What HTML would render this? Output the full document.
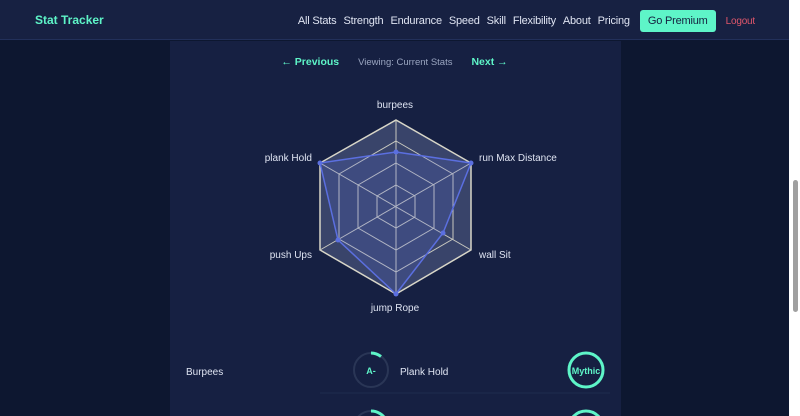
<!DOCTYPE html>
<html><head><meta charset="utf-8"><style>
*{margin:0;padding:0;box-sizing:border-box}
html,body{width:800px;height:416px;overflow:hidden}
body{background:#0d1730;font-family:"Liberation Sans",sans-serif;position:relative}
.nav{position:absolute;left:0;top:0;width:789px;height:40px;background:#172142;border-bottom:1px solid #22305a}
.logo{position:absolute;left:35px;top:13px;color:#5ef5c8;font-weight:bold;font-size:12px}
.links{position:absolute;right:34px;top:10px;display:flex;align-items:center;font-size:11px;color:#dfe4f2;letter-spacing:-0.2px}
.links span{margin-left:7px}
.btn{background:#5ef5c8;color:#15203f;padding:5px 8px;border-radius:3px;margin-left:10px!important}
.lo{color:#e0566b;margin-left:10px!important;font-size:10px}
.panel{position:absolute;left:170px;top:41px;width:451px;height:375px;background:#162042}
.pager{position:absolute;top:56px;left:0;width:789px;text-align:center;font-size:9.5px;color:#9aa5c0}
.pager b{color:#5ef5c8;font-size:10.5px;margin:0 19px}
.sb{position:absolute;left:789px;top:0;width:11px;height:416px;background:#fff;z-index:5}
.th{position:absolute;left:793px;top:180px;width:5px;height:132px;background:#a0a0a0;border-radius:3px;z-index:6}
</style></head><body>
<div class="nav"><div class="logo">Stat Tracker</div>
<div class="links"><span>All Stats</span><span>Strength</span><span>Endurance</span><span>Speed</span><span>Skill</span><span>Flexibility</span><span>About</span><span>Pricing</span><span class="btn">Go Premium</span><span class="lo">Logout</span></div></div>
<div class="panel"></div>
<div class="pager"><b>← Previous</b>Viewing: Current Stats<b>Next →</b></div>
<svg style="position:absolute;left:0;top:0;overflow:hidden" width="789" height="416" font-family="Liberation Sans" font-size="10" fill="#dfe4f2">
<g stroke="#c9c9c0" stroke-width="1" fill="none">
<polygon points="396,120 471,163 471,250 396,294 320,250 320,163" fill="#525e85" fill-opacity="0.6" stroke="#d8d6c8" stroke-width="1.5"/>
<polygon points="396,141 453,174 453,239 396,272 339,239 339,174"/>
<polygon points="396,163 434,185 434,228 396,250 358,228 358,185"/>
<polygon points="396,185 415,196 415,217 396,228 377,217 377,196"/>
<line x1="396" y1="120" x2="396" y2="294"/><line x1="320" y1="163" x2="471" y2="250"/><line x1="471" y1="163" x2="320" y2="250"/>
</g>
<polygon points="396,152 471,163 443,233 396,294 338,240 320,163" fill="#5668d8" fill-opacity="0.2" stroke="#5b6fe0" stroke-width="1.5"/>
<g fill="#5b6fe0"><circle cx="396" cy="152" r="2.5"/><circle cx="471" cy="163" r="2.5"/><circle cx="443" cy="233" r="2.5"/><circle cx="396" cy="294" r="2.5"/><circle cx="338" cy="240" r="2.5"/><circle cx="320" cy="163" r="2.5"/></g>
<text x="395" y="108" text-anchor="middle">burpees</text>
<text x="479" y="161">run Max Distance</text>
<text x="479" y="258">wall Sit</text>
<text x="395" y="311" text-anchor="middle">jump Rope</text>
<text x="312" y="258" text-anchor="end">push Ups</text>
<text x="312" y="161" text-anchor="end">plank Hold</text>
<text x="186" y="375">Burpees</text>
<text x="400" y="375">Plank Hold</text>
<circle cx="371" cy="370" r="17" stroke="#2a3656" stroke-width="2" fill="none"/>
<path d="M371 353 A17 17 0 0 1 381 356.5" stroke="#5ef5c8" stroke-width="3" fill="none"/>
<text x="371" y="374" text-anchor="middle" fill="#5ef5c8" font-weight="bold" font-size="9">A-</text>
<circle cx="586" cy="370" r="17" stroke="#5ef5c8" stroke-width="3" fill="none"/>
<text x="586" y="374" text-anchor="middle" fill="#5ef5c8" font-weight="bold" font-size="9">Mythic</text>
<line x1="320" y1="393" x2="610" y2="393" stroke="#1f2b4e"/>
<circle cx="371" cy="428" r="17" stroke="#2a3656" stroke-width="2" fill="none"/>
<path d="M371 411 A17 17 0 0 1 386 420" stroke="#5ef5c8" stroke-width="3" fill="none"/>
<circle cx="586" cy="428" r="17" stroke="#5ef5c8" stroke-width="3" fill="none"/>
</svg>
<div class="sb"></div><div class="th"></div>
</body></html>
